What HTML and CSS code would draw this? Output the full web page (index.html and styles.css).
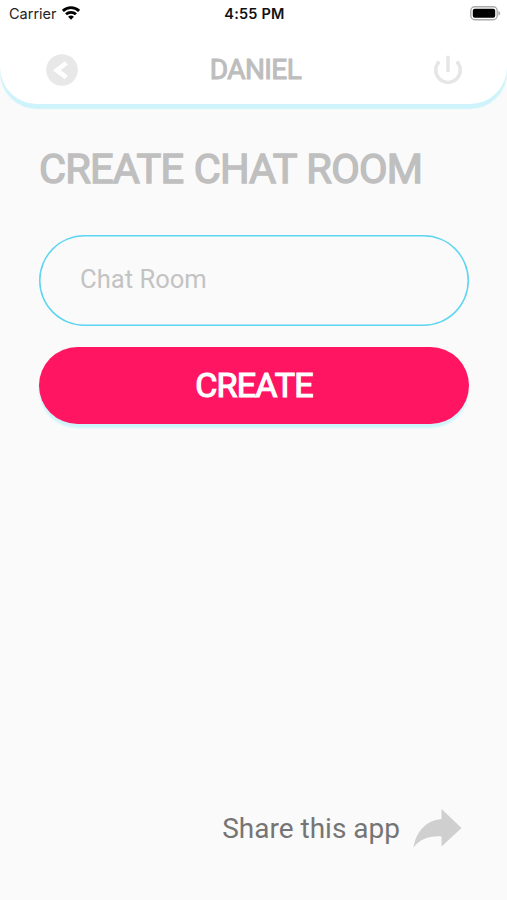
FILE: index.html
```
<!DOCTYPE html>
<html lang="en">
<head>
<meta charset="utf-8">
<title>Create Chat Room</title>
<link rel="stylesheet" href="styles.css">
</head>
<body>
<header class="header">
  <div class="status">
    <div class="carrier"><span>Carrier</span>
      <svg class="wifi" width="18" height="14" viewBox="0 0 18 14" fill="none" stroke="#000" stroke-width="2.8"><path d="M.9 4.9a11.500 11.500 0 0 1 16.200 0M4 8.300a7.200 7.200 0 0 1 10 0"/><path d="M9 13.700 6.100 10.800a4.200 4.200 0 0 1 5.800 0z" fill="#000" stroke="none"/></svg>
    </div>
    <div class="time">4:55 PM</div>
    <svg class="battery" width="31" height="15" viewBox="0 0 31 15"><rect x=".8" y=".8" width="26.400" height="13" rx="4" fill="#fff" stroke="#aaa" stroke-width="1.400"/><rect x="2.800" y="2.800" width="22.400" height="9" rx="2" fill="#000"/><path d="M28.400 5c2.400.6 2.400 4 0 4.600z" fill="#aaa"/></svg>
  </div>
  <nav class="bar">
    <svg width="32" height="32" viewBox="0 0 32 32"><circle cx="16" cy="16" r="15.800" fill="#e8e8e8"/><path d="M20.300 9 10.800 16.200l9.500 7.200" fill="none" stroke="#fff" stroke-width="4.600"/></svg>
    <h2 class="user">DANIEL</h2>
    <svg width="30" height="30" viewBox="0 0 30 30" fill="none" stroke="#e6e6e6" stroke-width="3.500"><path d="M6.300 6.400a12.300 12.300 0 1 0 17.400 0M15 .8V17"/></svg>
  </nav>
</header>
<main class="content">
  <h1 class="title">CREATE CHAT ROOM</h1>
  <input class="room" type="text" placeholder="Chat Room" aria-label="Chat Room">
  <button class="create">CREATE</button>
</main>
<footer class="share">
  <span>Share this app</span>
  <svg width="49" height="39" viewBox="0 0 49 39"><path d="M28.500 0 48.500 19 28.500 37.500V27.500C17 26.500 7 30 .5 38.500 3.500 22 13 11.500 28.500 10z" fill="#cfcfcf"/></svg>
</footer>
</body>
</html>
```
FILE: styles.css
```
* { box-sizing: border-box; }
body {
  margin: 0;
  height: 900px;
  display: flex;
  flex-direction: column;
  overflow: hidden;
  background: #fafafa;
  font-family: Roboto, "Liberation Sans", sans-serif;
}
.header {
  height: 104px;
  background: #fff;
  border-radius: 0 0 37px 37px;
  box-shadow: 0 5px 1px #cef3fa;
}
.status {
  height: 28px;
  display: grid;
  grid-template-columns: 1fr auto 1fr;
  align-items: center;
  padding: 0 6px 0 9px;
  font: 14.5px/28px Inter, sans-serif;
  color: #222;
}
.carrier { display: flex; align-items: center; gap: 5px; }
.wifi { margin-bottom: 2px; }
.time { margin-left: -1px; font-weight: 600; letter-spacing: .2px; color: #111; }
.battery { justify-self: end; margin-bottom: 1px; }
.bar {
  display: flex;
  align-items: center;
  justify-content: space-between;
  height: 83px;
  padding: 0 44px 0 46px;
}
.user, .title, .create { font-weight: 400; }
.user {
  margin: 0;
  font-size: 28px;
  line-height: 32px;
  letter-spacing: -.6px;
  color: #bdbdbd;
  -webkit-text-stroke: 1px #bdbdbd;
}
.content {
  flex: 1;
  display: flex;
  flex-direction: column;
  padding: 40px 38px 0 39px;
}
.title {
  margin: 0 0 41px;
  font-size: 41.500px;
  line-height: 50px;
  letter-spacing: -.8px;
  word-spacing: 1px;
  white-space: nowrap;
  color: #bfbfbf;
  -webkit-text-stroke: 1.400px #bfbfbf;
}
.room {
  height: 91px;
  margin-bottom: 21px;
  padding: 0 41px 4px;
  border: 0;
  border-radius: 46px;
  background: transparent;
  box-shadow: inset 0 0 0 1.500px #5dd5f0;
  font: 25.600px Roboto, sans-serif;
}
.room::placeholder { color: #c3c3c3; opacity: 1; }
.create {
  height: 77px;
  padding: 0 0 2px;
  border: 0;
  border-radius: 39px;
  background: #ff1562;
  box-shadow: 0 4px 2px #cff4fa;
  font-family: inherit;
  font-size: 34px;
  letter-spacing: -.75px;
  color: #fff;
  -webkit-text-stroke: 1.200px #fff;
}
.share {
  display: flex;
  align-items: center;
  justify-content: flex-end;
  gap: 13px;
  margin-bottom: 52px;
  padding-right: 45px;
  font-size: 28px;
  line-height: 39px;
  color: #757575;
}
```
